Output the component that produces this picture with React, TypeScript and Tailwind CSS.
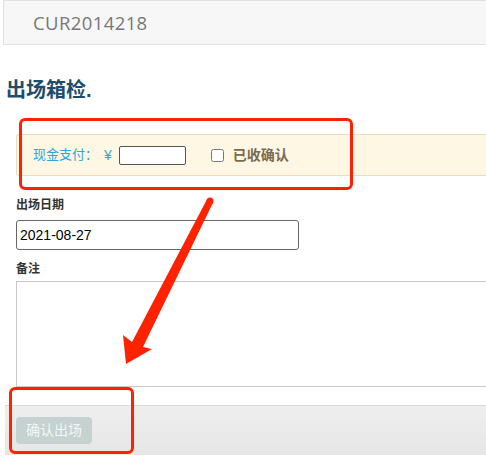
import React from 'react';

const font = { fontFamily: '"Liberation Sans", "Noto Sans CJK SC", sans-serif' };

export default function App() {
  return (
    <div className="relative w-[486px] h-[464px] overflow-hidden bg-white" style={font}>
      {/* Header */}
      <div className="ml-[3px] h-[45px] border-l border-t border-b border-[#e2e2e2] bg-[#f7f7f7] pl-[29px] flex items-center">
        <span className="text-[18.5px] text-[#787878] tracking-[0.4px]" style={{ fontFamily: '"Open Sans", sans-serif' }}>
          CUR2014218
        </span>
      </div>

      {/* Title */}
      <h1 className="mt-[34px] ml-[6px] text-[20px] leading-[22px] font-bold text-[#1d4d6b]">出场箱检.</h1>

      {/* Payment bar */}
      <div className="mt-[33px] ml-4 h-[42px] rounded-l-[3px] border border-r-0 border-[#eadfb8] bg-[#fdf7e3] pl-4 flex items-center">
        <span className="text-[13px] text-[#2ea5df]">现金支付</span>
        <span className="inline-block w-[13px] text-[13px] text-[#2ea5df]">：</span>
        <span className="ml-[6px] text-[14px] text-[#2ea5df]">¥</span>
        <input className="ml-[7px] w-[67px] h-[19px] rounded-[2px] border border-[#555] bg-white" />
        <input type="checkbox" className="ml-[25px] w-[13px] h-[13px]" />
        <span className="ml-[9px] text-[14px] font-bold text-[#7b6a50]">已收确认</span>
      </div>

      {/* Date */}
      <div className="mt-[22px] ml-4 text-[12px] leading-[14px] font-bold text-[#333]">出场日期</div>
      <input
        defaultValue="2021-08-27"
        className="mt-[8px] ml-4 block w-[283px] h-[30px] rounded-[3px] border border-[#666] px-[3px] text-[14px] text-black"
      />

      {/* Remark */}
      <div className="mt-[12px] ml-4 text-[12px] leading-[14px] font-bold text-[#333]">备注</div>
      <textarea className="mt-[5px] ml-4 block w-[480px] h-[106px] border border-[#c8c8c8] resize-none" />

      {/* Footer */}
      <div className="mt-[18px] ml-[5px] h-[50px] border-t border-[#d9d9d9] bg-gradient-to-b from-[#eeeeee] to-[#e6e6e6] pl-[11px] pt-[11px]">
        <button className="w-[76px] h-[27px] rounded-[4px] bg-[#c6d2cf] text-[14px] text-[#f4f6f6]">确认出场</button>
      </div>

      {/* Annotation boxes */}
      <div className="absolute left-[19px] top-[118px] w-[334px] h-[72px] rounded-[6px] border-[3px] border-[#ff2200]" />
      <div className="absolute left-[9px] top-[387px] w-[125px] h-[67px] rounded-[6px] border-[3px] border-[#ff2200]" />

      {/* Arrow */}
      <svg className="absolute left-0 top-0" width="486" height="464" viewBox="0 0 486 464">
        <circle cx="210" cy="201" r="3.5" fill="#ff2200" />
        <polygon
          points="213.1,202.6 143,347 152,349 126,364 123,335 132,342 206.9,199.4"
          fill="#ff2200"
        />
      </svg>
    </div>
  );
}
